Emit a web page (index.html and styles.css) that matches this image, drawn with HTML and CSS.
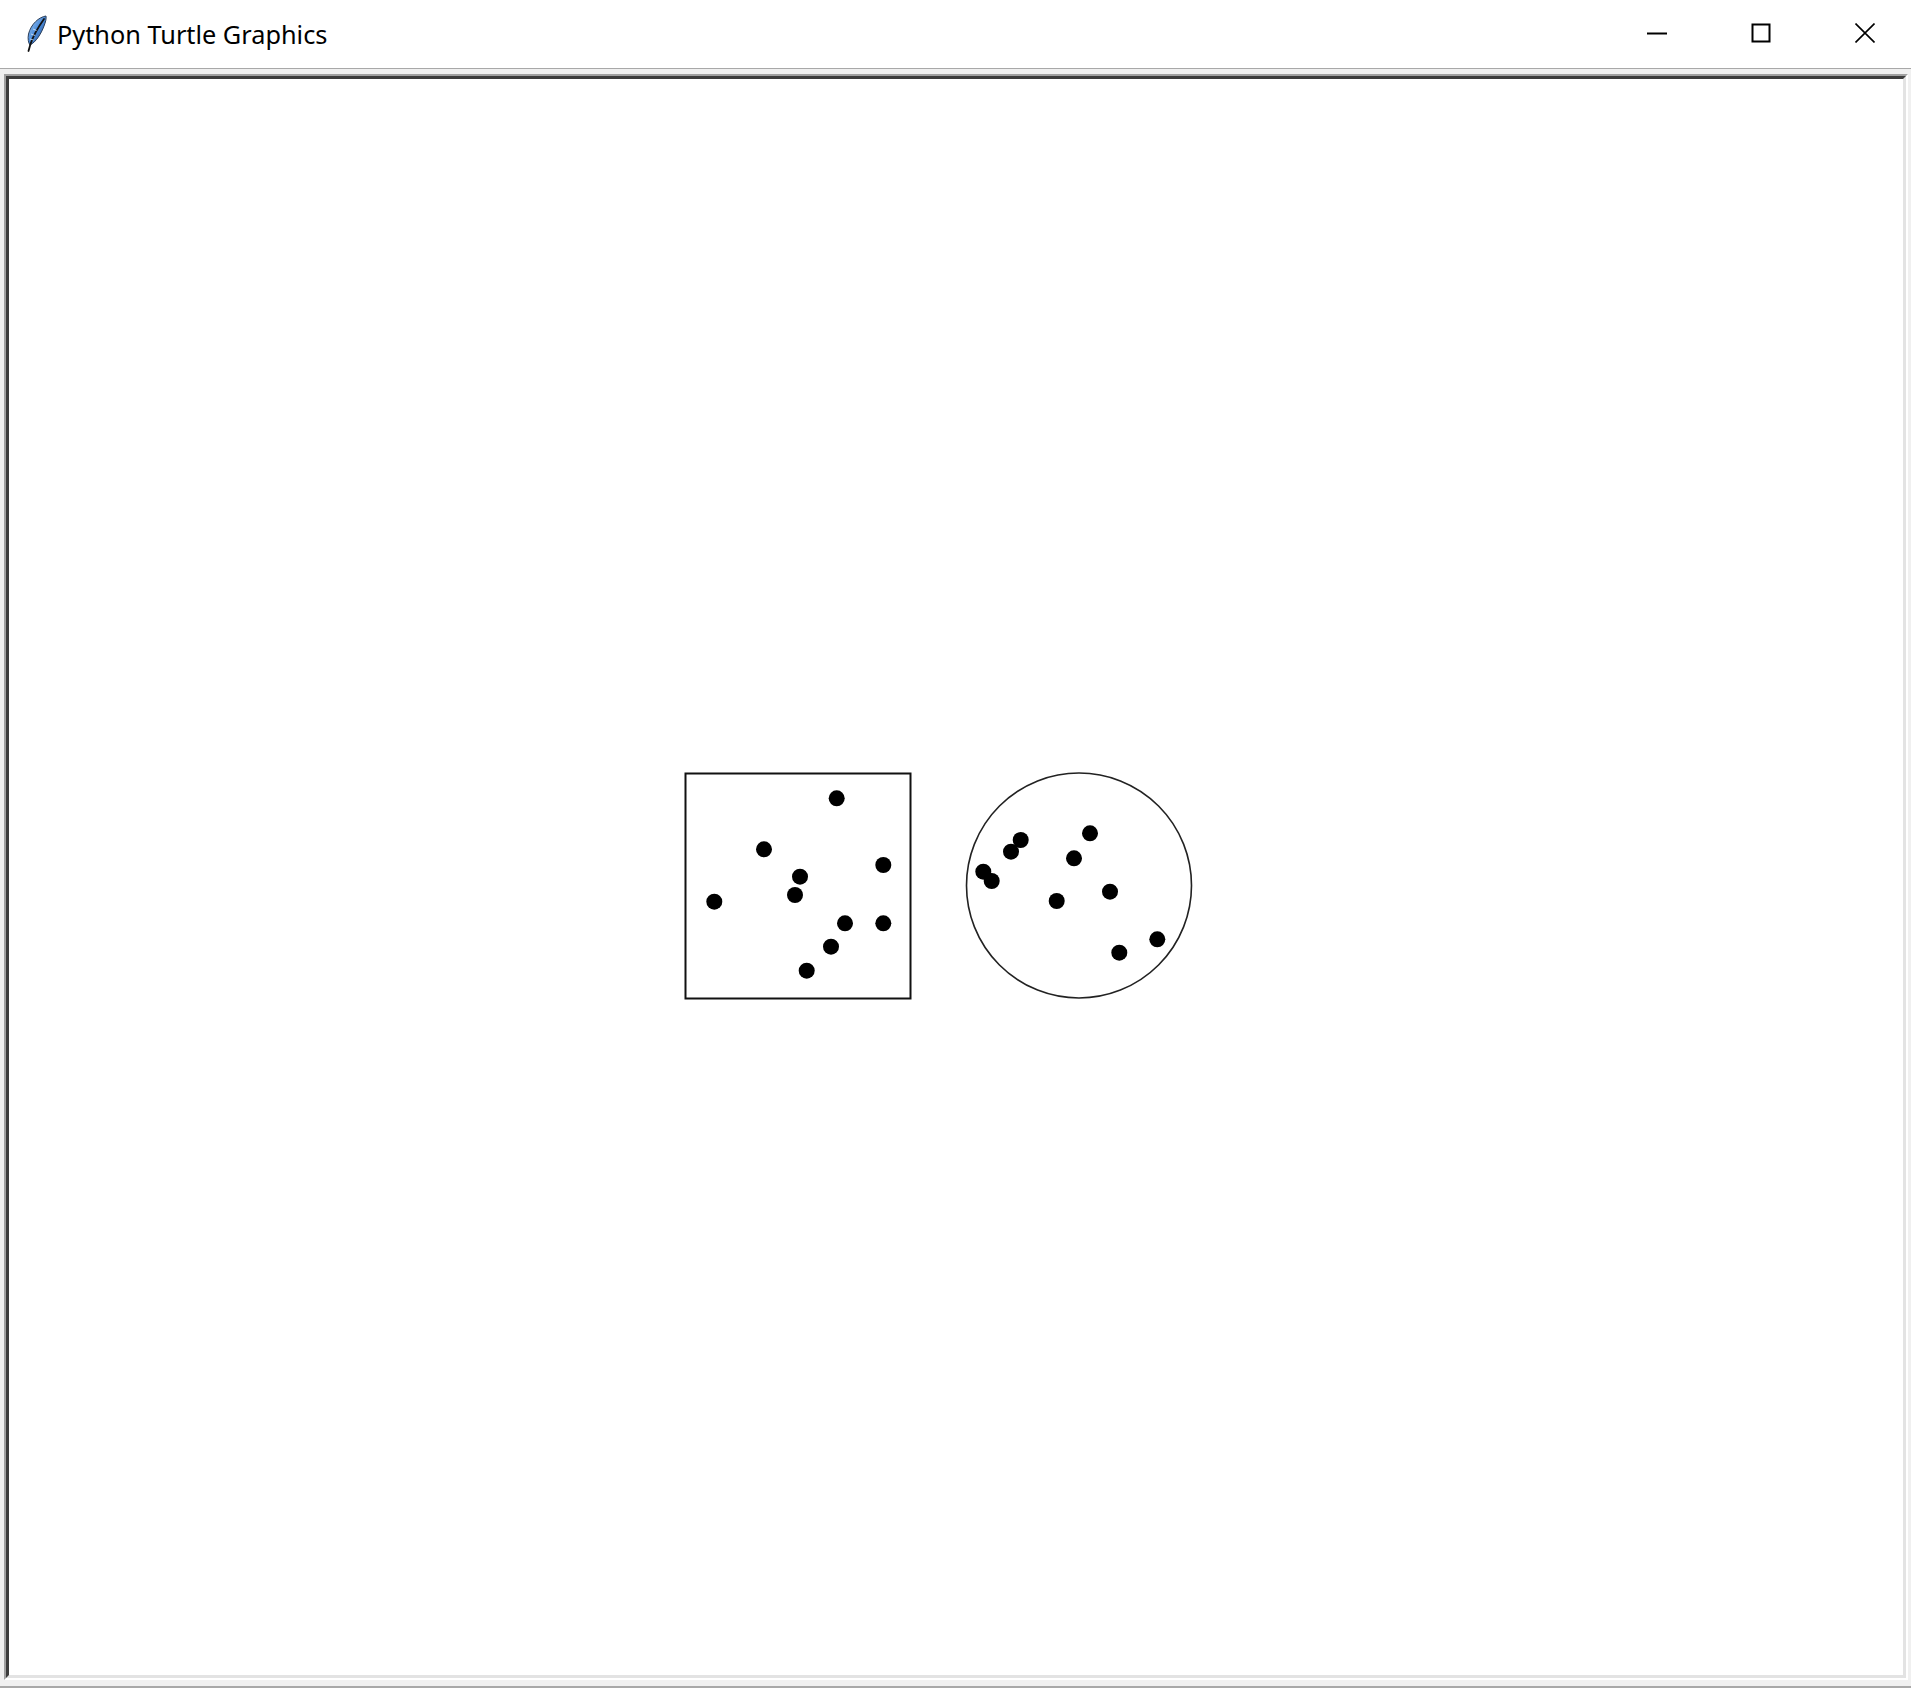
FILE: index.html
```html
<!DOCTYPE html>
<html lang="en">
<head>
<meta charset="utf-8">
<title>Python Turtle Graphics</title>
<link rel="stylesheet" href="styles.css">
</head>
<body>
<div class="window">
  <header class="titlebar">
    <div class="title-left">
      <svg class="app-icon" width="22" height="38" viewBox="0 0 22 38">
        <defs>
          <linearGradient id="fg" x1="0" y1="0" x2="1" y2="1">
            <stop offset="0" stop-color="#a8d0f8"/>
            <stop offset="0.5" stop-color="#4a8ad8"/>
            <stop offset="1" stop-color="#1d3f7a"/>
          </linearGradient>
        </defs>
        <path d="M21 1 C14 2 6 9 3.5 19 C2.5 24 3.5 28 5 30 C11 27 16 19 19 11 C20.5 7 21.5 4 21 1 Z" fill="url(#fg)" stroke="#2a3e5a" stroke-width="1"/>
        <path d="M19 4 C14 11 8.5 20 5.5 29 L3.5 36" fill="none" stroke="#111" stroke-width="1.8" stroke-linecap="round"/>
        <path d="M8 14 L11.5 15.5 M6 19 L10 20.5 M5 24 L8.5 25" stroke="#d4e8fb" stroke-width="0.8"/>
      </svg>
      <span class="title-text">Python Turtle Graphics</span>
    </div>
    <div class="controls">
      <svg class="ctl" width="20" height="20" viewBox="0 0 20 20"><path d="M0 10.5 H20" stroke="#000" stroke-width="2"/></svg>
      <svg class="ctl" width="20" height="20" viewBox="0 0 20 20"><rect x="1.5" y="1.5" width="17" height="17" fill="none" stroke="#000" stroke-width="2"/></svg>
      <svg class="ctl" width="20" height="20" viewBox="0 0 20 20"><path d="M0.5 0.5 L19.5 19.5 M19.5 0.5 L0.5 19.5" stroke="#000" stroke-width="1.6"/></svg>
    </div>
  </header>
  <main class="frame">
    <div class="canvas-outer">
      <div class="canvas-inner">
        <svg class="drawing" width="1896" height="1598" viewBox="9 79 1896 1598">
          <rect x="685.5" y="773.5" width="225" height="225" fill="none" stroke="#111" stroke-width="2"/>
          <circle cx="1079" cy="885.5" r="112.5" fill="none" stroke="#222" stroke-width="1.6"/>
          <g fill="#000">
            <circle cx="836.7" cy="798.3" r="8"/>
            <circle cx="764" cy="849.3" r="8"/>
            <circle cx="883.3" cy="865" r="8"/>
            <circle cx="800" cy="876.7" r="8"/>
            <circle cx="795" cy="895" r="8"/>
            <circle cx="714.3" cy="901.7" r="8"/>
            <circle cx="845" cy="923.3" r="8"/>
            <circle cx="883.3" cy="923.3" r="8"/>
            <circle cx="831" cy="946.7" r="8"/>
            <circle cx="806.7" cy="970.7" r="8"/>

            <circle cx="1090" cy="833.3" r="8"/>
            <circle cx="1020.7" cy="840" r="8"/>
            <circle cx="1011" cy="851.7" r="8"/>
            <circle cx="1074" cy="858.3" r="8"/>
            <circle cx="983.3" cy="871.7" r="8"/>
            <circle cx="991.7" cy="881" r="8"/>
            <circle cx="1110" cy="891.7" r="8"/>
            <circle cx="1056.7" cy="901" r="8"/>
            <circle cx="1157.3" cy="939.3" r="8"/>
            <circle cx="1119.3" cy="952.7" r="8"/>
          </g>
        </svg>
      </div>
    </div>
  </main>
</div>
</body>
</html>
```
FILE: styles.css
```css
html, body {
  margin: 0;
  padding: 0;
}
body {
  width: 1911px;
  height: 1688px;
  background: #f0f0f0;
  overflow: hidden;
  font-family: "Noto Sans", "Open Sans", "Liberation Sans", sans-serif;
}
.window {
  width: 1911px;
  height: 1688px;
  display: flex;
  flex-direction: column;
  box-sizing: border-box;
  border-bottom: 2px solid #a8a8a8;
}
.titlebar {
  height: 68px;
  flex: 0 0 68px;
  background: #ffffff;
  border-bottom: 1px solid #a8a8a8;
  display: flex;
  align-items: center;
  justify-content: space-between;
}
.title-left {
  display: flex;
  align-items: center;
  padding-left: 25px;
  gap: 10px;
  margin-top: 0;
}
.app-icon {
  display: block;
}
.title-text {
  font-size: 25.3px;
  color: #000;
  line-height: 1;
  letter-spacing: 0;
  position: relative;
  top: 1px;
}
.controls {
  display: flex;
  align-items: center;
  gap: 84px;
  padding-right: 36px;
  margin-top: -2px;
}
.ctl {
  display: block;
}
.frame {
  flex: 1 1 auto;
  padding: 5px 3px 0 4px;
  background: #f0f0f0;
}
.canvas-outer {
  width: 1904px;
  height: 1606px;
  box-sizing: border-box;
  border-style: solid;
  border-width: 2px;
  border-color: #a0a0a0 #ffffff #ffffff #a0a0a0;
}
.canvas-inner {
  width: 100%;
  height: 100%;
  box-sizing: border-box;
  border-style: solid;
  border-width: 3px;
  border-color: #3c3c3c #e3e3e3 #e3e3e3 #3c3c3c;
  background: #ffffff;
  overflow: hidden;
}
.drawing {
  display: block;
}
```
